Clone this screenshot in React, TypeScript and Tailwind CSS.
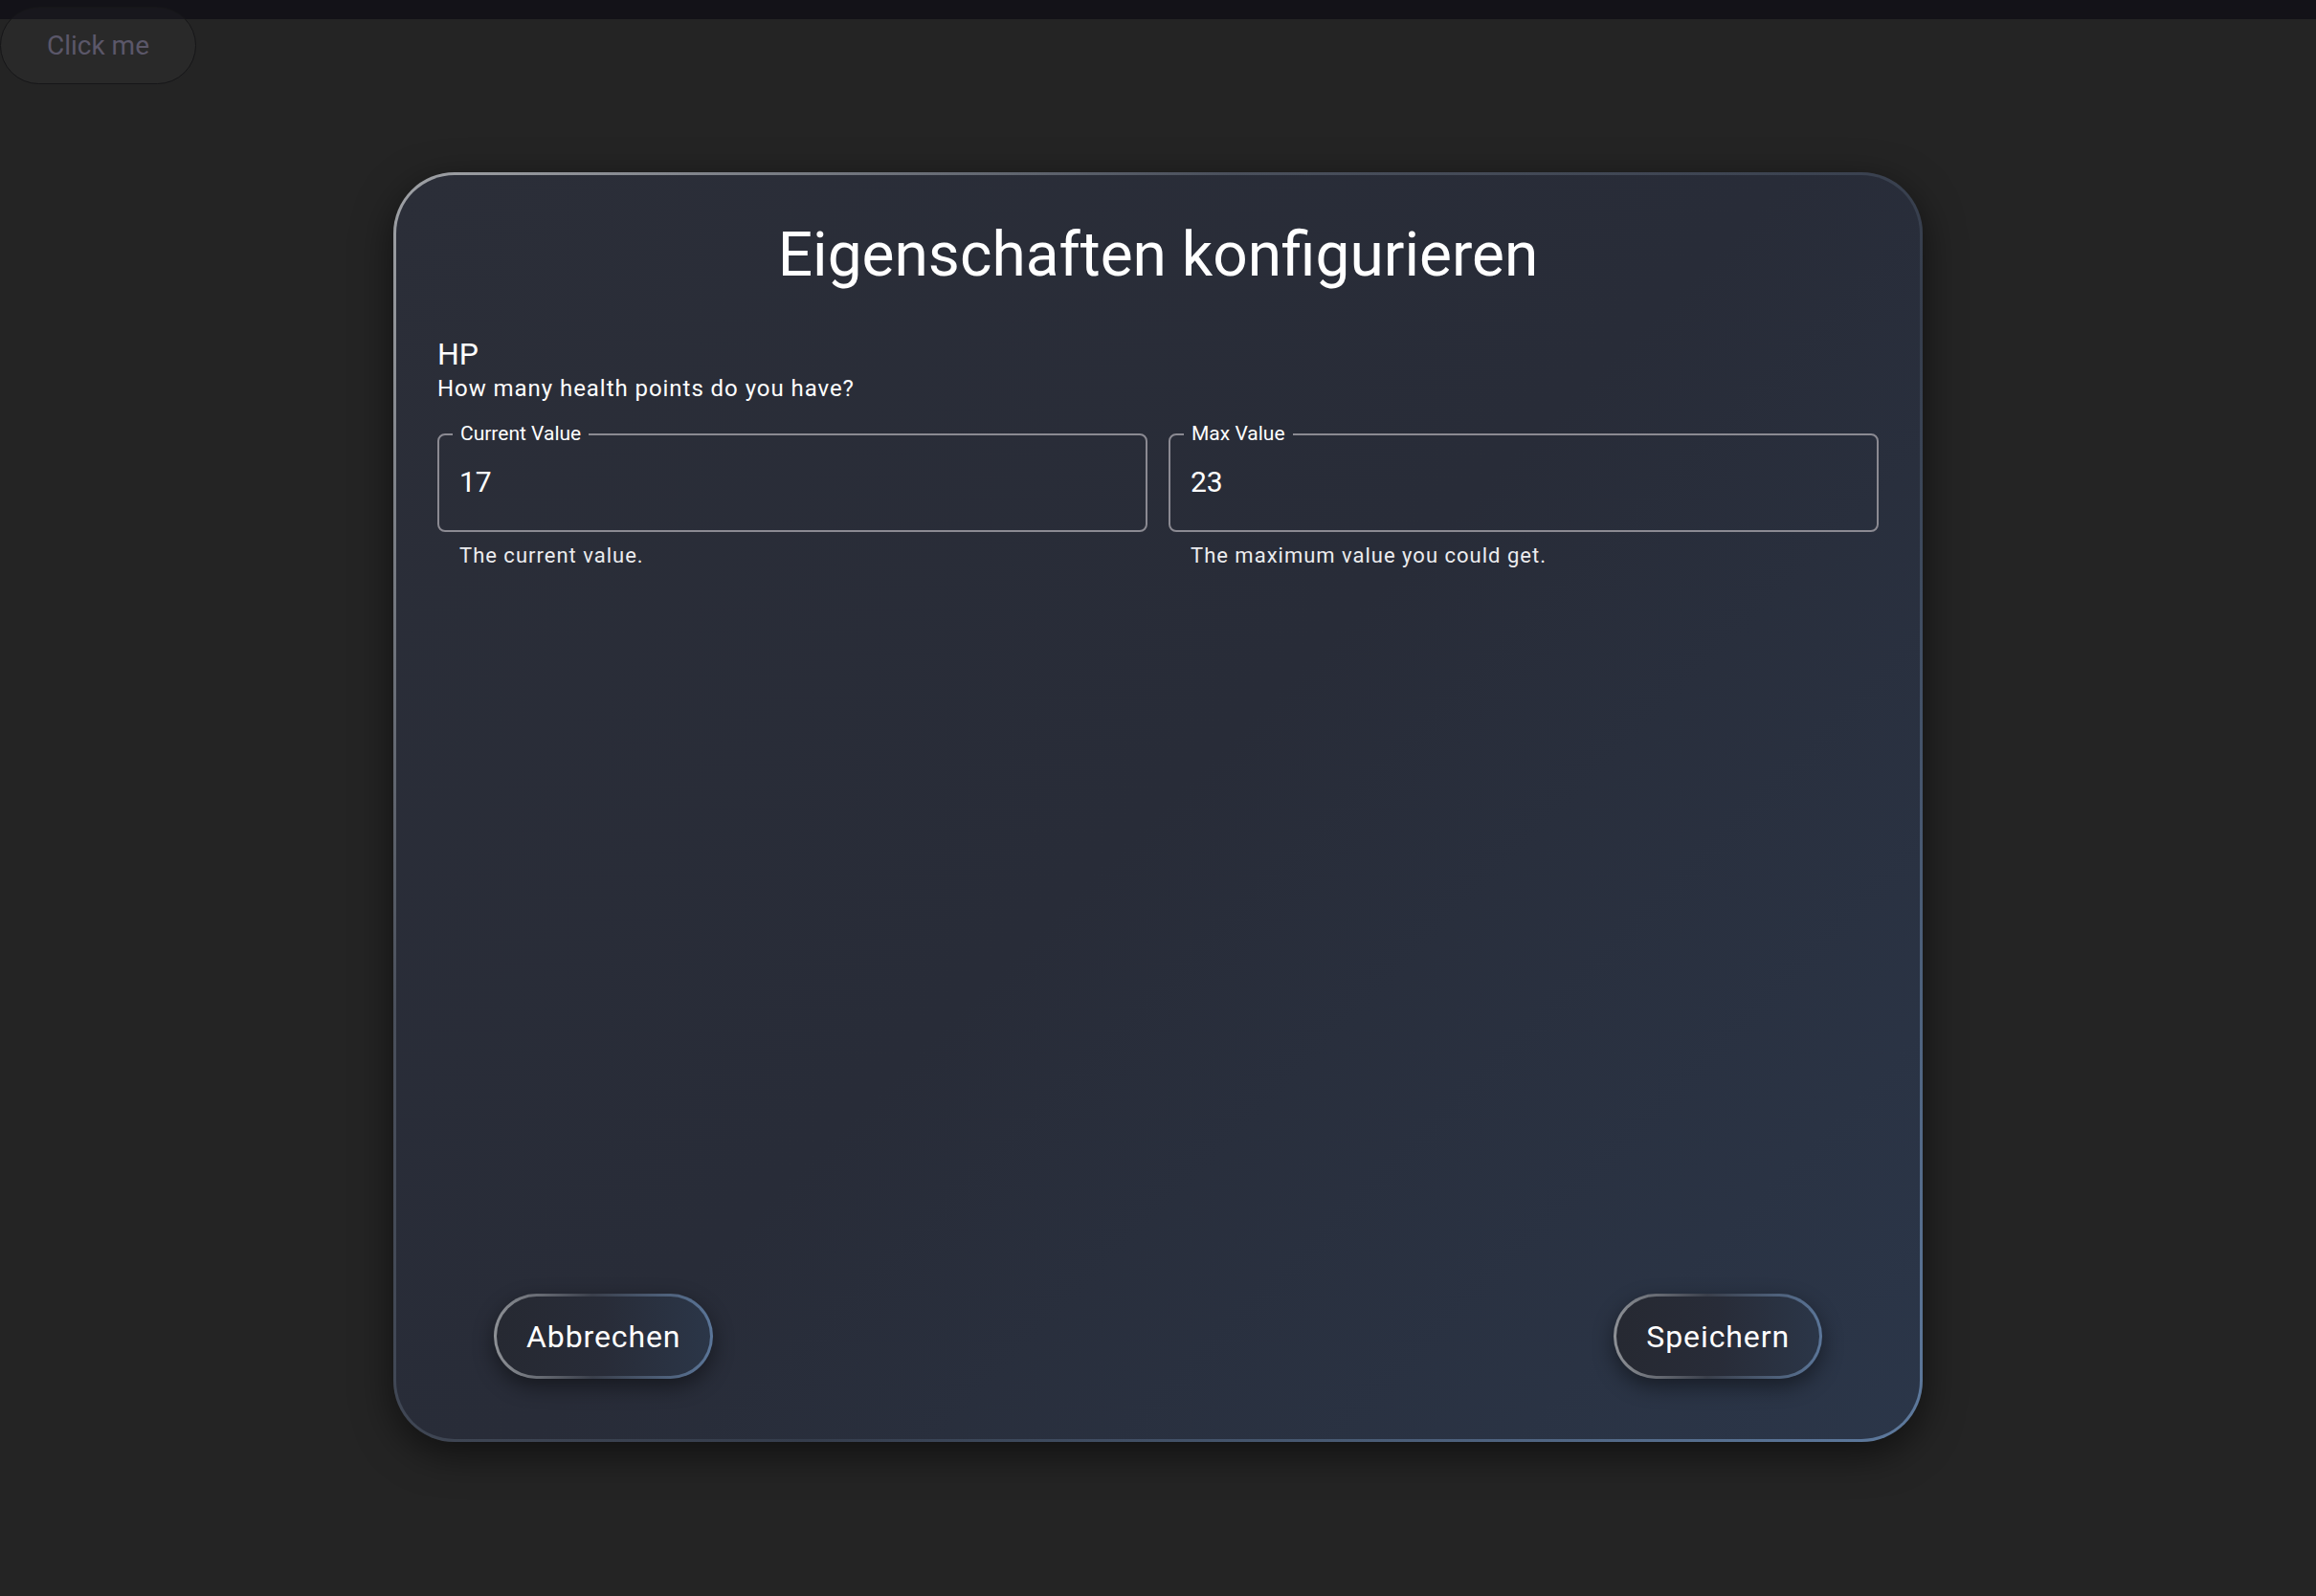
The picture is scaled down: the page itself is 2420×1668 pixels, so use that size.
import React from 'react';

function ValueField({ label, value, helper }: { label: string; value: string; helper: string }) {
  return (
    <div className="flex flex-col">
      <fieldset className="rounded-[8px] border-2 border-[#8b8a92] px-0 m-0 min-w-0">
        <legend className="ml-[14px] px-[8px] text-[21px] leading-none text-white">{label}</legend>
        <div className="pl-[21px] pt-[25px] pb-[35px] text-[30px] leading-none text-white">{value}</div>
      </fieldset>
      <p className="mt-[14px] pl-[23px] text-[22px] leading-none tracking-[1px] text-[#ececef]">{helper}</p>
    </div>
  );
}

function PillButton({ children }: { children: React.ReactNode }) {
  return (
    <button className="rounded-full p-[3px] bg-[linear-gradient(90deg,#8e9196_0%,#3a3f4b_45%,#5b7699_100%)] shadow-[0_8px_22px_rgba(0,0,0,0.45)]">
      <span className="flex h-[83px] items-center rounded-full px-[31px] bg-[linear-gradient(90deg,#262932_0%,#282c38_50%,#2b3648_100%)] text-[32px] leading-none tracking-[0.9px] text-white">
        {children}
      </span>
    </button>
  );
}

export default function App() {
  return (
    <div className="relative min-h-[1668px] bg-[#242424] font-['Roboto',sans-serif]">
      <div className="h-[20px] bg-[#131218]" />

      {/* trigger button sits over the top strip */}
      <button className="absolute left-0 top-[7px] h-[81px] w-[205px] rounded-full border border-[#161618] bg-[rgba(255,255,255,0.025)] text-[28px] text-[#5b5769]">
        Click me
      </button>

      <div className="mx-auto mt-[160px] w-[1598px] h-[1327px] rounded-[64px] p-[3px] bg-[linear-gradient(135deg,#a0a2a6_0%,#4a505c_30%,#353d4c_60%,#5e7a9e_100%)] shadow-[0_12px_40px_rgba(0,0,0,0.55)]">
        <div className="flex h-full flex-col rounded-[61px] bg-[linear-gradient(135deg,#2b2e38_0%,#282c38_50%,#2b3649_100%)]">
          <div className="px-[43px]">
            <h2 className="mt-[52px] text-center text-[64px] leading-none text-white">Eigenschaften konfigurieren</h2>

            <div className="mt-[55px] text-[32px] leading-none text-white">HP</div>
            <p className="mt-[8px] text-[24px] leading-none tracking-[0.95px] text-white">How many health points do you have?</p>

            <div className="mt-[25px] grid grid-cols-2 gap-[22px]">
              <ValueField label="Current Value" value="17" helper="The current value." />
              <ValueField label="Max Value" value="23" helper="The maximum value you could get." />
            </div>
          </div>

          <div className="mt-auto flex justify-between px-[102px] pb-[63px]">
            <PillButton>Abbrechen</PillButton>
            <PillButton>Speichern</PillButton>
          </div>
        </div>
      </div>
    </div>
  );
}
